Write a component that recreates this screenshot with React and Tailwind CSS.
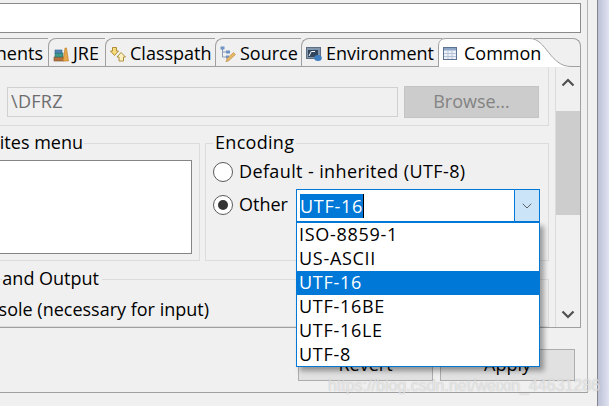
import { ChevronDown } from "lucide-react";

const ENCODINGS = ["ISO-8859-1", "US-ASCII", "UTF-16", "UTF-16BE", "UTF-16LE", "UTF-8"];

function JreIcon() {
  return (
    <svg width="16" height="16" viewBox="0 0 16 16" className="shrink-0">
      <rect x="1" y="11" width="10" height="4" fill="#b5723f" stroke="#7f4d28" strokeWidth="0.6" />
      <rect x="2" y="7" width="8" height="4" fill="#3e9a8c" stroke="#2c6f66" strokeWidth="0.6" />
      <rect x="2" y="4" width="7" height="3" fill="#4f86b8" stroke="#35618a" strokeWidth="0.6" />
      <path d="M10 15 L12 2 L13.5 2 L15.5 15 Z" fill="#e8a64a" stroke="#b97a25" strokeWidth="0.6" />
    </svg>
  );
}

function ClasspathIcon() {
  return (
    <svg width="16" height="16" viewBox="0 0 16 16" className="shrink-0">
      <path d="M2.5 1.5 H6.5 V5 H8.5 L4.5 9.5 L0.5 5 H2.5 Z" fill="#f6dc7e" stroke="#a8842a" strokeWidth="0.9" />
      <path d="M11 6.5 L15.5 11 H13.5 V15 H9 V11 H7 Z" fill="#fbf0c0" stroke="#a8842a" strokeWidth="0.9" />
    </svg>
  );
}

function SourceIcon() {
  return (
    <svg width="16" height="16" viewBox="0 0 16 16" className="shrink-0">
      <path d="M2.5 2 V11 H6 M2.5 6 H6" fill="none" stroke="#8a9bb5" strokeWidth="1" />
      <rect x="0.5" y="0.5" width="4" height="3" fill="#6f93c4" />
      <rect x="6" y="4.5" width="4" height="3" fill="#6f93c4" />
      <rect x="6" y="9.5" width="3" height="3" fill="#6f93c4" />
      <path d="M6 16 L7 12.5 L13.5 6.5 L15.5 8.5 L9 14.5 Z" fill="#e8b765" stroke="#b58a45" strokeWidth="0.6" />
    </svg>
  );
}

function EnvironmentIcon() {
  return (
    <svg width="16" height="16" viewBox="0 0 16 16" className="shrink-0">
      <rect x="0.5" y="1.5" width="14" height="11" fill="#8195ad" stroke="#5f6f83" />
      <rect x="2" y="4" width="10" height="7" fill="#33465f" />
      <path d="M3 10 L5.5 5 M6 5.5 H9" stroke="#ffffff" strokeWidth="1" />
      <ellipse cx="12" cy="12" rx="3.8" ry="3" fill="#3f7fc0" />
    </svg>
  );
}

function CommonIcon() {
  return (
    <svg width="15" height="15" viewBox="0 0 15 15" className="shrink-0">
      <rect x="0.5" y="1.5" width="13" height="12" fill="#eef2f8" stroke="#5d7392" />
      <rect x="1" y="2" width="12" height="2.5" fill="#8ea6c8" />
      <path d="M1 7.5 H13 M1 10.5 H13 M5 5 V13 M9 5 V13" stroke="#b4c3d9" strokeWidth="1" />
    </svg>
  );
}

function Radio({ checked }) {
  return (
    <span className="w-[20px] h-[20px] rounded-full border border-[#5a5a5a] bg-white flex items-center justify-center shrink-0">
      {checked && <span className="w-[10px] h-[10px] rounded-full bg-[#333333]" />}
    </span>
  );
}

function Tab({ width, icon, children, first }) {
  return (
    <div
      className={`h-[28px] flex items-center gap-[4px] pl-[4px] pt-[2px] border-t border-[#a0a0a0] ${first ? "justify-end pr-[5px]" : "border-l rounded-tl-[8px]"}`}
      style={{ width }}
    >
      {icon}
      <span className="whitespace-nowrap">{children}</span>
    </div>
  );
}

export default function App() {
  return (
    <div
      className="relative w-[609px] h-[406px] overflow-hidden flex bg-[#f0f0f0] text-[18px] text-black"
      style={{ fontFamily: '"Open Sans", "Noto Sans", sans-serif' }}
    >
      <div className="w-[598px] shrink-0 border-r border-[#85858c] flex">
        <div className="w-[588px] shrink-0 h-[393px] border-b border-r border-b-[#a0a0a0] border-r-[#b4b4b4] pt-[3px]">
          {/* top name field */}
          <div className="w-[581px] h-[30px] bg-white border border-l-0 border-[#8a8a8a]" />

          {/* tab strip */}
          <div className="w-[581px] mt-[5px] h-[29px] flex border-b border-[#a0a0a0] relative">
            <Tab first width={48}>nents</Tab>
            <Tab width={57} icon={<JreIcon />}>JRE</Tab>
            <Tab width={110} icon={<ClasspathIcon />}>Classpath</Tab>
            <Tab width={86} icon={<SourceIcon />}>Source</Tab>
            <Tab width={137} icon={<EnvironmentIcon />}>Environment</Tab>
            <div className="flex-1 h-[28px] border-t border-r border-[#a0a0a0] rounded-tr-[8px]" />
            {/* selected tab sits over the strip line */}
            <div className="absolute left-[438px] top-0 w-[133px] h-[29px]">
              <svg width="133" height="29" viewBox="0 0 133 29" className="absolute inset-0">
                <path d="M0 29 V8 Q0 0 8 0 H92 C108 0 112 28 133 28 V29 Z" fill="#ffffff" />
                <path d="M0.5 29 V8 Q0.5 0.5 8 0.5 H92 C108 0.5 112 28.5 133 28.5" fill="none" stroke="#a0a0a0" />
              </svg>
              <div className="relative h-[28px] pt-[2px] flex items-center gap-[6px] pl-[5px]">
                <CommonIcon />
                <span>Common</span>
              </div>
            </div>
          </div>

          {/* tab body */}
          <div className="w-[581px] h-[261px] border-r border-b border-[#a0a0a0] flex overflow-hidden">
            <div className="w-[556px] shrink-0 border-r border-[#dcdcdc] h-full">
              {/* location row */}
              <div className="w-[549px] h-[59px] border-r border-b border-[#dcdcdc] flex items-start pl-[7px] pt-[20px] gap-[6px]">
                <div className="w-[391px] h-[30px] border border-[#d0d0d0] pl-[3px] pb-[2px] flex items-center text-[#6d6d6d] tracking-[0.3px]">\DFRZ</div>
                <div className="w-[135px] h-[32px] -mt-[1px] pb-[2px] bg-[#cccccc] border border-[#c4c4c4] text-[#838383] flex items-center justify-center">Browse...</div>
              </div>

              {/* favorites + encoding */}
              <div className="flex gap-[5px] mt-[17px] w-[549px]">
                <fieldset className="w-[200px] h-[118px] border border-l-0 border-[#dcdcdc] relative">
                  <legend className="absolute -top-[15px] right-[115px] px-[1px] bg-[#f0f0f0] leading-[26px] whitespace-nowrap">ites menu</legend>
                  <div className="w-[192px] h-[94px] mt-[16px] bg-white border border-l-0 border-[#858585]" />
                </fieldset>
                <fieldset className="flex-1 h-[118px] border border-[#dcdcdc] relative pl-[7px] pt-[18px]">
                  <legend className="absolute -top-[15px] left-[7px] px-[2px] bg-[#f0f0f0] leading-[26px] tracking-[0.3px]">Encoding</legend>
                  <div className="flex items-center gap-[6px] h-[20px]">
                    <Radio />
                    <span className="whitespace-nowrap tracking-[0.38px] -mt-[1px]">Default - inherited (UTF-8)</span>
                  </div>
                  <div className="flex items-center gap-[6px] h-[20px] mt-[13px]">
                    <Radio checked />
                    <span className="-mt-[1px]">Other</span>
                  </div>
                </fieldset>
              </div>

              {/* standard input and output */}
              <div className="w-[549px] h-[48px] mt-[18px] border-t border-r border-b border-[#dcdcdc] relative">
                <span className="absolute right-[446px] -top-[15px] pr-[3px] bg-[#f0f0f0] leading-[26px] whitespace-nowrap">and Output</span>
                <div className="absolute right-[339px] top-[16px] leading-[26px] whitespace-nowrap">sole (necessary for input)</div>
              </div>
            </div>

            {/* scrollbar */}
            <div className="flex-1 flex flex-col items-center">
              <svg width="14" height="9" viewBox="0 0 14 9" className="mt-[11px] shrink-0">
                <path d="M1.5 7.5 L7 2 L12.5 7.5" fill="none" stroke="#505050" strokeWidth="2.2" />
              </svg>
              <div className="w-full h-[104px] mt-[24px] bg-[#cdcdcd] shrink-0" />
              <svg width="14" height="9" viewBox="0 0 14 9" className="mt-[95px] shrink-0">
                <path d="M1.5 1.5 L7 7 L12.5 1.5" fill="none" stroke="#505050" strokeWidth="2.2" />
              </svg>
            </div>
          </div>

          {/* buttons */}
          <div className="w-[575px] flex justify-end gap-[7px] mt-[21px]">
            <div className="w-[135px] h-[32px] pb-[2px] bg-[#e1e1e1] border border-[#adadad] flex items-center justify-center">Revert</div>
            <div className="w-[135px] h-[32px] pb-[2px] bg-[#e1e1e1] border border-[#adadad] flex items-center justify-center">Apply</div>
          </div>
        </div>
      </div>
      <div className="flex-1 bg-linear-to-r from-[#bcc1d6] to-[#dfe2f0]" />

      {/* open combo, lies over the page */}
      <div className="absolute left-[296px] top-[189px] w-[244px] h-[33px] bg-white border border-[#0078d7] flex">
        <div className="flex-1 flex items-center pl-[3px]">
          <span className="bg-[#0078d7] text-white leading-[24px] tracking-[0.7px]">UTF-16</span>
          <span className="w-px h-[24px] bg-black" />
        </div>
        <div className="w-[25px] bg-[#cce4f7] border-l border-[#0078d7] flex items-center justify-center">
          <ChevronDown size={16} strokeWidth={1.2} color="#404040" />
        </div>
      </div>
      <div className="absolute left-[296px] top-[222px] w-[244px] h-[145px] bg-white border border-[#0078d7] shadow-[4px_4px_5px_rgba(0,0,0,0.35)]">
        {ENCODINGS.map((item) => (
          <div
            key={item}
            className={`h-[24px] pl-[2px] pb-[2px] flex items-center tracking-[0.7px] ${item === "UTF-16" ? "bg-[#0078d7] text-white" : ""}`}
          >
            {item}
          </div>
        ))}
      </div>

      {/* blog watermark */}
      <div
        className="absolute left-[328px] top-[376px] text-[16px] leading-[20px] whitespace-nowrap text-white/60 [text-shadow:0_0_1px_rgba(130,130,130,0.55)]"
        style={{ fontFamily: '"Liberation Sans", sans-serif' }}
      >
        https://blog.csdn.net/weixin_44631286
      </div>
    </div>
  );
}
